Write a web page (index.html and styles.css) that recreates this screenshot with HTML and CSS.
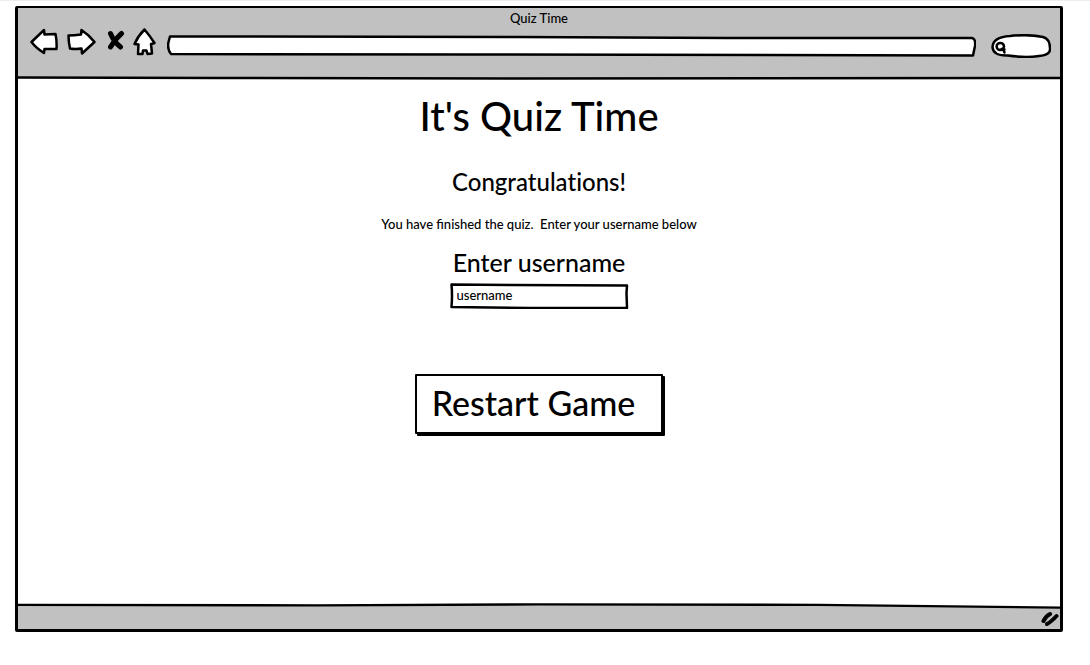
FILE: index.html
```
<!DOCTYPE html>
<html lang="en">
<head>
<meta charset="utf-8">
<meta name="viewport" content="width=device-width, initial-scale=1">
<title>Quiz Time</title>
<link rel="stylesheet" href="styles.css">
</head>
<body>
<div class="window">
  <header class="chrome">
    <div class="window-title">Quiz Time</div>
    <div class="toolbar">
      <button class="tool back" type="button" aria-label="Back">
        <svg width="28" height="28" viewBox="0 0 28 28"><path d="M1.500 14 L14 2 L14.500 6.500 Q19 6 25.500 6 Q27 13 26.500 21 L14.500 21 L14 25 Q6 20 1.500 14Z"/></svg>
      </button>
      <button class="tool forward" type="button" aria-label="Forward">
        <svg width="29" height="28" viewBox="0 0 29 28"><path d="M1.500 7.500 Q7 7.500 14 6.500 L14.500 2 Q22 7 27.500 14 L15 25.500 L14.500 20.500 Q8 21.500 3 20.500 Q1.500 14 1.500 7.500Z"/></svg>
      </button>
      <button class="tool stop" type="button" aria-label="Stop">
        <svg width="18" height="28" viewBox="0 0 18 28"><path class="cross" d="M3.500 5.500 Q7 14 13.500 19 M14.500 5.500 Q8 11 3.500 19"/></svg>
      </button>
      <button class="tool home" type="button" aria-label="Home">
        <svg width="23" height="28" viewBox="0 0 23 28"><path d="M11.500 1.500 Q17 8 21.500 15 Q19 16 18 16 L19 25.500 L14.500 26 L13.500 22.500 L10 22.500 L9.500 26 L5 26 L5.500 16.500 L1.500 16 Q5 8 11.500 1.500Z"/></svg>
      </button>
      <div class="sketch address">
        <svg class="outline" viewBox="0 0 808 22" preserveAspectRatio="none" aria-hidden="true"><path d="M3 1.500 L350 2 L560 3 L804 3 Q808 4 807 11 L805 20.500 L300 19.500 L4 19 Q0 14 1.500 7Z"/></svg>
        <input type="text" aria-label="Address">
      </div>
      <div class="sketch search">
        <svg class="outline" viewBox="0 0 60 24" preserveAspectRatio="none" aria-hidden="true"><path d="M1.500 13 Q2 3 19 2 Q38 0 52 3 Q59 5 59 14 Q60 21 48 22 Q35 24 17 21.500 Q2 22 1.500 13Z"/></svg>
        <svg class="lens" width="12" height="14" viewBox="0 0 12 14" aria-hidden="true"><path d="M9 5.500 A3.700 3.500 0 1 1 1.600 5.500 A3.700 3.500 0 1 1 9 5.500 M6.500 8 L9.500 8.500 M8.500 9 L9.500 11.500"/></svg>
        <input type="search" aria-label="Search">
      </div>
    </div>
    <svg class="rule" viewBox="0 0 1042 4" preserveAspectRatio="none" aria-hidden="true"><path d="M0 1.500 L200 2 L500 2.500 L1042 2"/></svg>
  </header>
  <main class="page">
    <h1>It's Quiz Time</h1>
    <h2>Congratulations!</h2>
    <p>You have finished the quiz.&nbsp; Enter your username below</p>
    <label for="username">Enter username</label>
    <div class="sketch username">
      <svg class="outline" viewBox="0 0 179 26" preserveAspectRatio="none" aria-hidden="true"><path d="M1.500 1.500 L60 2 L177 2.500 L176.500 10 L177 25 L80 25 L1.500 24 Q2.500 12 1.500 1.500Z"/></svg>
      <input id="username" type="text" value="username">
    </div>
    <button class="restart" type="button">Restart Game</button>
  </main>
  <footer class="status">
    <svg class="edge" viewBox="0 0 1042 28" preserveAspectRatio="none" aria-hidden="true"><path d="M-3 2 L300 2.500 L520 1.500 L800 2 L1045 5 L1045 32 L-3 32Z"/></svg>
    <svg class="grip" width="18" height="16" viewBox="0 0 18 16" aria-hidden="true"><path d="M2.500 10 Q5 5 9 3 M6 13 Q10 11 15.500 5"/></svg>
  </footer>
</div>
</body>
</html>
```
FILE: styles.css
```
* {
  box-sizing: border-box;
}

body {
  display: flex;
  min-height: 100vh;
  margin: 0;
  padding: 5px 27px 33px 15px;
  border-top: 1px solid #ececec;
  background: #fff;
  color: #000;
  font-family: Lato, "Open Sans", sans-serif;
  font-size: 13px;
  font-weight: 500;
}

button,
input {
  margin: 0;
  padding: 0;
  border: 0;
  background: none;
  color: inherit;
  font: inherit;
}

svg {
  display: block;
  fill: none;
  stroke: #000;
  stroke-width: 2.5;
  stroke-linecap: round;
  stroke-linejoin: round;
}

.window {
  display: flex;
  flex: 1;
  flex-direction: column;
  min-width: 0;
  border: 3px solid #000;
  border-width: 2px 3px 3px;
  border-radius: 2px;
}

.chrome {
  background: #c1c1c1;
}

.window-title {
  height: 19px;
  line-height: 20px;
  text-align: center;
}

.toolbar {
  display: flex;
  align-items: center;
  height: 30px;
  padding: 0 9px 0 12px;
}

.tool {
  flex: none;
  cursor: pointer;
}

.tool svg {
  fill: #fff;
}

.tool .cross {
  fill: none;
  stroke-width: 5;
}

.forward {
  margin-left: 9px;
}

.stop {
  margin-left: 11px;
}

.home {
  margin-left: 8px;
}

.sketch {
  position: relative;
}

.outline {
  position: absolute;
  inset: 0;
  width: 100%;
  height: 100%;
  fill: #fff;
}

.sketch input {
  position: relative;
  display: block;
  width: 100%;
  height: 100%;
  padding: 0 7px 2px;
  outline: none;
}

.address {
  flex: 1;
  height: 22px;
  margin: 8px 15px 0 11px;
}

.search {
  flex: none;
  width: 60px;
  height: 24px;
  margin-top: 7px;
}

.lens {
  position: absolute;
  top: 7px;
  left: 4px;
  stroke-width: 2.5;
}

.sketch input[type="search"] {
  padding-left: 17px;
  appearance: none;
}

.rule {
  width: 100%;
  height: 4px;
  margin-top: 19px;
  background: linear-gradient(#c1c1c1 50%, #fff 50%);
}

.page {
  display: flex;
  flex: 1;
  flex-direction: column;
  align-items: center;
  padding: 10px 16px;
}

h1,
h2,
p {
  margin: 0;
  font-weight: 500;
}

h1 {
  font-size: 40px;
  line-height: 52px;
}

h2 {
  margin-top: 24px;
  font-size: 24px;
  font-variant-ligatures: none;
  line-height: 32px;
}

p {
  margin-top: 16px;
  line-height: 20px;
}

label {
  margin-top: 12px;
  font-size: 25px;
  line-height: 32px;
}

.username {
  width: 179px;
  height: 26px;
  margin-top: 5px;
}

.restart {
  min-width: 246px;
  height: 60px;
  margin-top: 65px;
  padding: 0 26px 2px 15px;
  border: 2px solid #000;
  border-radius: 1px;
  background: #fff;
  box-shadow: 2px 2px 0 #000;
  font-size: 34px;
  line-height: 40px;
  cursor: pointer;
}

.status {
  position: relative;
  display: flex;
  align-items: center;
  justify-content: flex-end;
  height: 26px;
  padding: 6px 1px 0 0;
  overflow: hidden;
}

.edge {
  position: absolute;
  inset: 0;
  width: 100%;
  height: 100%;
  fill: #c1c1c1;
}

.grip {
  position: relative;
  stroke-width: 4;
}
```
